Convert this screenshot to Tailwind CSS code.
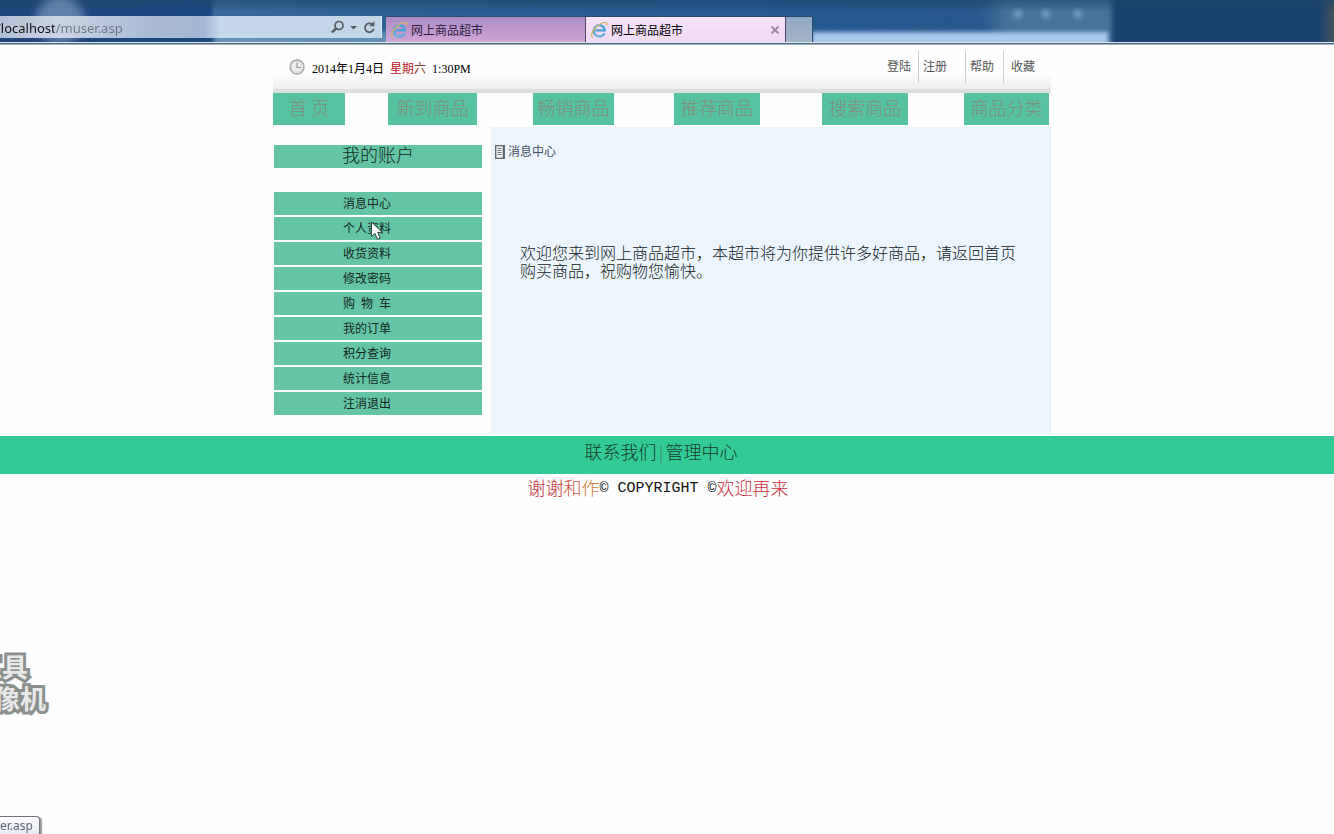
<!DOCTYPE html>
<html lang="zh-CN">
<head>
<meta charset="utf-8">
<meta name="viewport" content="width=device-width, initial-scale=1">
<title>网上商品超市</title>
<script src="https://cdn.jsdelivr.net/npm/@tailwindcss/browser@4"></script>
</head>
<body class="relative min-h-screen overflow-x-hidden bg-[#fefefe] font-['Liberation_Serif','Noto_Sans_CJK_SC',sans-serif] text-xs text-black">

<svg class="hidden" aria-hidden="true">
  <symbol id="ie" viewBox="0 0 18 18">
    <path d="M14.400 12.200A5.600 5.600 0 1 1 14.900 9.300H5.500" fill="none" stroke="#4aa0d6" stroke-width="2.300"/>
    <path d="M13.600 12.400A5.200 5.200 0 0 1 4 11.500" fill="none" stroke="#8fd0ee" stroke-width=".8"/>
    <path d="M3 16.400C.4 15.600 1.600 10.600 5.800 6.200S15.400.4 16.800 2c.5.8.3 1.800-.2 2.800" fill="none" stroke="#cdb765" stroke-width="1.300"/>
  </symbol>
</svg>

<header class="relative h-[45px] overflow-hidden border-b border-[#a3b0bc] bg-[linear-gradient(90deg,#1e467c_0,#1c4882_210px,#3a6b9b_215px,#2c5f92_400px,#245a90_800px,#28588c_980px,#47729c_1010px,#47729c_1108px,#17406f_1116px,#17406f_1318px,#45525a_100%)]">
  <div class="absolute inset-x-0 top-0 h-3 bg-linear-to-b from-[#1c4468]/60 to-transparent"></div>
  <div class="absolute -top-1 left-9 size-12 rounded-full bg-[#8ba6ca]/60 blur-[5px]"></div>
  <div class="absolute top-8 left-[812px] h-4 w-[296px] bg-[#a9c8ed] blur-[2px]"></div>
  <div class="absolute top-8 left-[215px] h-4 w-[180px] bg-[#87afd0]/60 blur-[2px]"></div>
  <div class="absolute top-[10px] left-[1014px] flex gap-5 blur-[2px]">
    <span class="size-2 bg-[#7099c2]"></span><span class="size-2 bg-[#7099c2]"></span><span class="ml-1 size-2 bg-[#7099c2]"></span>
  </div>
  <div class="relative flex items-start gap-1 pt-4">
    <form class="flex h-[22px] w-[382px] items-center border-r border-[#e0ebf5] bg-[linear-gradient(90deg,#b3c0d3,#c9d4e4_60px,#a9bad2_150px,#a4b8d3_205px,#c4d8ea_220px,#c2d6e8)] pr-1 text-[#565c66]">
      <label for="url" class="sr-only">地址</label>
      <input id="url" type="text" value="/localhost/muser.asp" class="-ml-1 h-[22px] min-w-0 flex-1 bg-[linear-gradient(90deg,#111_58px,#6c7683_58px)] bg-clip-text pt-0.5 font-['Noto_Sans',sans-serif] text-[13px] text-transparent outline-none">
      <button type="button" aria-label="搜索" class="pl-1"><svg class="h-4 w-[15px]" viewBox="0 0 15 16" fill="none" stroke="currentColor"><circle cx="9" cy="6.500" r="4" stroke-width="1.700"/><path d="M6.200 9.300L1.800 13.500" stroke-width="2.400"/></svg></button>
      <button type="button" aria-label="历史" class="pl-1"><svg class="h-4 w-[9px]" viewBox="0 0 9 16"><path d="M1 7h7L4.500 10.500z" fill="currentColor"/></svg></button>
      <button type="button" aria-label="刷新" class="pl-1"><svg class="h-4 w-[15px]" viewBox="0 0 15 16" fill="none"><path d="M11.700 9.800A4.400 4.400 0 1 1 10.200 5.400" stroke="currentColor" stroke-width="1.800"/><path d="M12.300 2v5.200H7.200z" fill="currentColor"/></svg></button>
    </form>
    <nav class="flex h-[26px] font-['Noto_Sans_CJK_SC',sans-serif]" aria-label="标签页">
      <button type="button" class="flex w-[200px] items-center gap-[3px] border-t border-r border-[#294a73] border-r-[#4e4669] bg-linear-to-b from-[#ad8bc6] to-[#cea6d3] pl-1 text-[#2d1d40]"><svg class="size-[18px]"><use href="#ie"/></svg>网上商品超市</button>
      <div class="flex w-[200px] items-center border-t border-r border-[#294a73] border-r-[#4e4669] bg-linear-to-b from-[#f7e3fa] to-[#efd9f4] pr-[5px] pl-1">
        <button type="button" class="flex flex-1 items-center gap-[3px]"><svg class="size-[18px]"><use href="#ie"/></svg>网上商品超市</button>
        <button type="button" aria-label="关闭"><svg class="size-[10px]" viewBox="0 0 10 10"><path d="M1.500 1.500l7 7m0-7l-7 7" stroke="#9b8aa4" stroke-width="1.800"/></svg></button>
      </div>
      <button type="button" aria-label="新标签页" class="w-[27px] border-t border-r border-[#294a73] bg-linear-to-b from-[#8fa9c2] to-[#a5b5c4]"></button>
    </nav>
  </div>
  <div class="absolute inset-x-0 top-[42px] h-[2px] border-t border-[#dce8f2] bg-[#4b6a80]"></div>
</header>

<div class="mx-auto w-full max-w-[788px] pr-[10px]">
  <div class="flex h-12 justify-between border-b-4 border-[#dedede] bg-[linear-gradient(#fefefe_28px,#f3f3f3_38px,#ececec)] pr-2 pl-4">
    <div class="flex h-11 items-center gap-[7px]">
      <svg class="size-4" viewBox="0 0 16 16"><circle cx="8" cy="8" r="7" fill="#eee" stroke="#a2a2a2" stroke-width="1.300"/><path d="M8 3.500V8.500h4" fill="none" stroke="#999" stroke-width="1.200"/><circle cx="8" cy="8" r="5.300" fill="none" stroke="#ccc" stroke-width=".6"/></svg>
      <p class="flex gap-[6px] pt-1"><span>2014年1月4日</span><span class="text-[#b51625]">星期<span class="text-[#804430]">六</span></span><span>1:30PM</span></p>
    </div>
    <nav class="mt-1.5 flex h-8 items-center leading-8 text-[#555]" aria-label="用户">
      <a href="#" class="pr-[7px]">登陆</a>
      <a href="#" class="border-l border-[#ccc] pr-[18px] pl-1">注册</a>
      <a href="#" class="border-l border-[#ccc] pr-[9px] pl-1">帮助</a>
      <a href="#" class="border-l border-[#ccc] pr-2 pl-[7px]">收藏</a>
    </nav>
  </div>

  <nav class="grid h-8 grid-cols-[115fr_145fr_141fr_148fr_142fr_87fr] text-lg leading-8 font-light text-[#858d7c]" aria-label="商品">
    <a href="#" class="w-[72px] bg-[#55c3a2] text-center">首 页</a>
    <a href="#" class="w-[89px] bg-[#55c3a2] text-center">新到商品</a>
    <a href="#" class="w-[81px] bg-[#55c3a2] text-center">畅销商品</a>
    <a href="#" class="w-[86px] bg-[#55c3a2] text-center">推荐商品</a>
    <a href="#" class="w-[86px] bg-[#55c3a2] text-center">搜索商品</a>
    <a href="#" class="w-[85px] bg-[#55c3a2] text-center">商品分类</a>
  </nav>

  <div class="flex justify-between pt-0.5">
    <aside class="ml-px w-[208px] pt-[18px]">
      <h2 class="h-[23px] bg-[#65c4a5] text-center text-lg leading-[22px] font-light text-[#12291f]">我的账户</h2>
      <ul class="mt-6 flex flex-col gap-[2px] leading-6 text-[#12261d] [&_a]:block [&_a]:h-[23px] [&_a]:bg-[#65c4a5] [&_a]:pl-[69px] [&_a]:whitespace-pre">
        <li><a href="#">消息中心</a></li>
        <li class="relative"><a href="#">个人资料</a>
          <svg class="absolute top-1 left-24 h-5 w-[14px]" viewBox="0 0 14 20"><path d="M1.500 1v14.500l3.400-3.200 2.500 6 2.800-1.200-2.500-5.700h4.600z" fill="#fff" stroke="#31463e" stroke-width="1"/></svg>
        </li>
        <li><a href="#">收货资料</a></li>
        <li><a href="#">修改密码</a></li>
        <li><a href="#">购  物  车</a></li>
        <li><a href="#">我的订单</a></li>
        <li><a href="#">积分查询</a></li>
        <li><a href="#">统计信息</a></li>
        <li><a href="#">注消退出</a></li>
      </ul>
    </aside>
    <main class="mb-[3px] min-h-[306px] w-[560px] border-r border-[#e2f1f5] bg-[#ecf5fb]">
      <h1 class="flex items-center gap-[3px] pt-4 pl-1 leading-[18px] text-[#3f4f66]">
        <svg class="h-[14px] w-[10px]" viewBox="0 0 10 14"><rect x=".7" y=".7" width="8.600" height="12.600" fill="#f2f2f2" stroke="#5c656f" stroke-width="1.300"/><path d="M2.500 3.500h4m-4 2h4m-4 2h4m-4 2h4" stroke="#6b747d"/><path d="M8.300 1v12" stroke="#3d4650"/></svg>消息中心
      </h1>
      <p class="mt-[84px] ml-[29px] w-[496px] text-base leading-[18px] font-light text-[#111a26]">欢迎您来到网上商品超市，本超市将为你提供许多好商品，请返回首页购买商品，祝购物您愉快。</p>
    </main>
  </div>
</div>

<footer class="text-lg font-light">
  <nav class="flex h-[38px] justify-center bg-[#33cb95] pr-3 leading-[34px] text-[#173a2b]" aria-label="页脚">
    <a href="#">联系我们</a><span class="w-[9px] text-center text-[#4a8068]">|</span><a href="#">管理中心</a>
  </nav>
  <p class="flex items-center justify-center pr-[18px] leading-[30px] text-[#cb3040]"><span>谢谢<span class="text-[#c95040]">和</span><span class="text-[#cf8040]">作</span></span><span class="font-['Liberation_Mono',monospace] text-[15px] text-[#111]">© COPYRIGHT ©</span><span>欢迎再来</span></p>
</footer>

<div class="absolute top-[650px] -left-6 font-['Noto_Sans_CJK_SC',sans-serif] text-[26px] leading-[31px] font-bold text-[#e9e9e9] [-webkit-text-stroke:6px_#8a908c] [paint-order:stroke_fill] [stroke-linejoin:round]" aria-hidden="true">
  <p class="h-8 leading-8">工具</p>
  <p class="-ml-2 h-8 leading-8">录像机</p>
</div>
<div class="fixed bottom-0 -left-px h-[18px] rounded-tr-sm border border-b-0 border-[#6f747b] bg-linear-to-b from-white to-[#e6e9f2] pr-[6px] font-['Noto_Sans',sans-serif] leading-[18px] text-[#5b626c] shadow-[2px_1px_1px_#9a9a9a]">er.asp</div>
</body>
</html>
